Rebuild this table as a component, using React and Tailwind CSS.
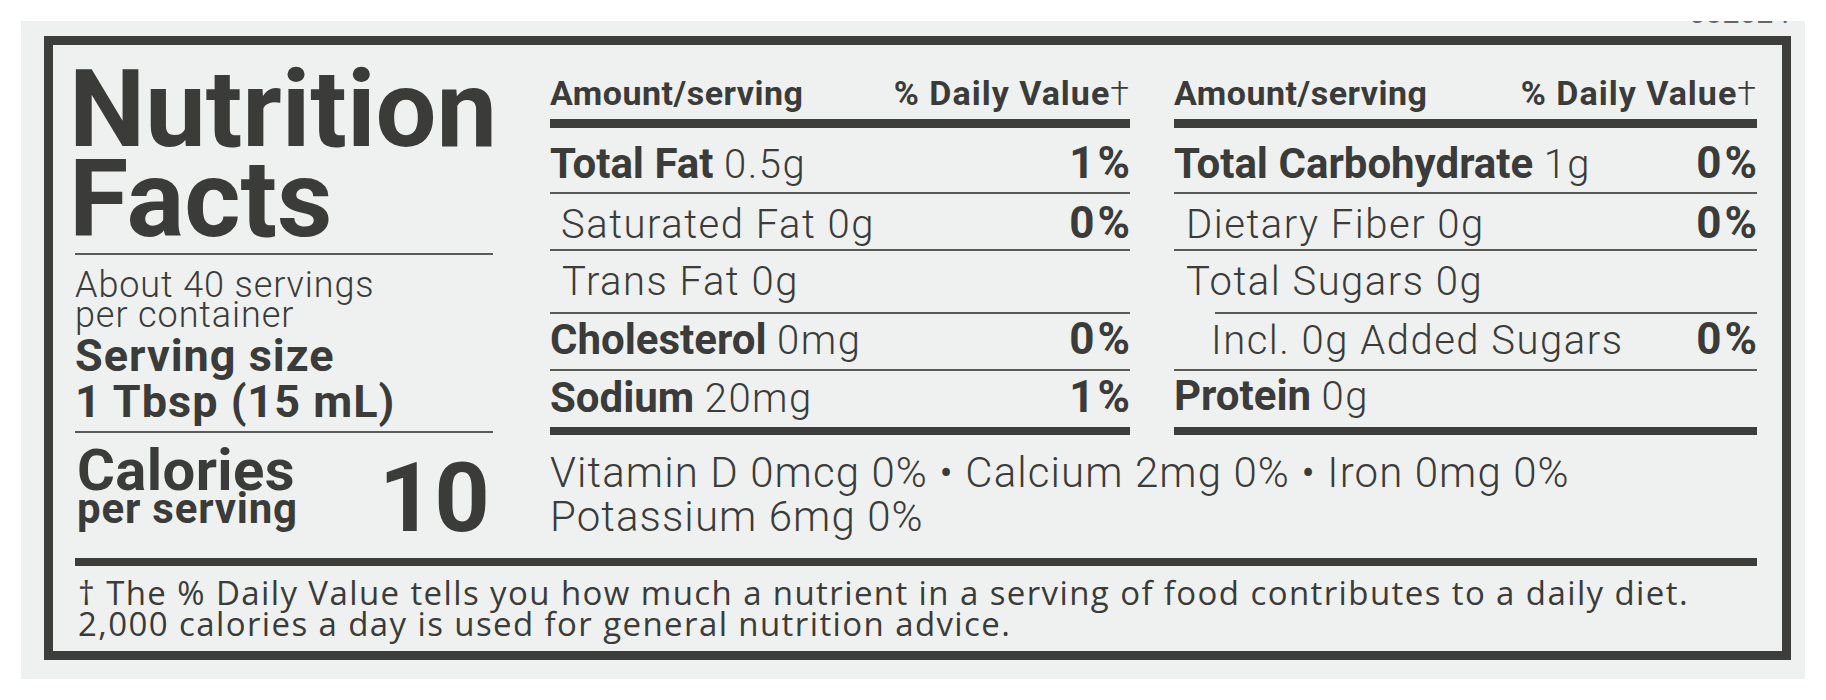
import React from "react";

const midRows = [
  { cls: "h-[64px] pt-[13px]", bold: "Total Fat", light: "0.5g", pct: "1%", indent: "" },
  { cls: "h-[55px] pt-[7px]", bold: "", light: "Saturated Fat 0g", pct: "0%", indent: "pl-[11px]" },
  { cls: "h-[61px] pt-[9px]", bold: "", light: "Trans Fat 0g", pct: "", indent: "pl-[12px]" },
  { cls: "h-[55px] pt-[3px]", bold: "Cholesterol", light: "0mg", pct: "0%", indent: "" },
  { cls: "h-[56px] pt-[4px]", bold: "Sodium", light: "20mg", pct: "1%", indent: "" },
];

const rightRows = [
  { cls: "h-[64px] pt-[13px]", bold: "Total Carbohydrate", light: "1g", pct: "0%", indent: "" },
  { cls: "h-[55px] pt-[7px]", bold: "", light: "Dietary Fiber 0g", pct: "0%", indent: "pl-[12px]" },
  { cls: "h-[61px] pt-[9px]", bold: "", light: "Total Sugars 0g", pct: "", indent: "pl-[12px]", lineCls: "ml-[41px]" },
  { cls: "h-[55px] pt-[3px]", bold: "", light: "Incl. 0g Added Sugars", pct: "0%", indent: "pl-[37px]" },
  { cls: "h-[56px] pt-[4px]", bold: "Protein", light: "0g", pct: "", indent: "" },
];

function Table({ rows, widthCls }) {
  return (
    <div className={widthCls}>
      <div className="h-[74px] pt-[31px] flex justify-between items-baseline text-[34px] leading-none font-bold">
        <span className="tracking-[0.5px]">Amount/serving</span>
        <span className="tracking-[1px]">
          % Daily Value<span className="font-light">†</span>
        </span>
      </div>
      <div className="h-[9px] bg-[#3d3d3b]" />
      {rows.map((r, i) => (
        <div key={i}>
          <div className={`flex justify-between items-baseline text-[42px] leading-none ${r.cls}`}>
            <div className={`whitespace-nowrap ${r.indent}`}>
              {r.bold && <span className="font-bold">{r.bold} </span>}
              <span className="font-light tracking-[1.5px] text-[40px]">{r.light}</span>
            </div>
            {r.pct && <span className="font-bold text-[44px] tracking-[3px] -mr-[3px]">{r.pct}</span>}
          </div>
          {i < rows.length - 1 ? (
            <div className={`h-[2px] bg-[#5a5a57] ${r.lineCls || ""}`} />
          ) : (
            <div className="h-[8px] bg-[#3d3d3b]" />
          )}
        </div>
      ))}
    </div>
  );
}

export default function App() {
  return (
    <div className="w-[1826px] h-[700px] bg-white pt-[21px] pl-[21px] font-['Roboto',sans-serif] text-[#3b3b39]">
      <div className="w-[1784px] h-[658px] bg-[#eef1f0]">
        <div className="h-[15px] flex justify-end pr-[15px]">
          <div className="h-[3px] overflow-hidden">
            <div className="-mt-[23px] text-[30px] leading-none text-[#666664]">032024</div>
          </div>
        </div>
        <div className="ml-[23px] w-[1747px] h-[624px] border-[9px] border-[#3d3d3b] pl-[22px]">
          <div className="flex h-[513px]">
            {/* Left column */}
            <div className="w-[418px]">
              <div className="pt-[19px] -ml-[6px] text-[108px] leading-[90px] font-bold">
                Nutrition
                <br />
                Facts
              </div>
              <div className="mt-[9px] h-[2px] bg-[#5a5a57]" />
              <div className="mt-[15px] text-[36px] leading-[30px] font-light tracking-[0.9px]">
                About 40 servings
                <br />
                per container
              </div>
              <div className="mt-[3px] text-[45px] leading-[46px] font-bold tracking-[1px]">
                Serving size
                <br />
                1 Tbsp (15 mL)
              </div>
              <div className="mt-[6px] h-[2px] bg-[#5a5a57]" />
              <div className="flex justify-between items-start pt-[14px]">
                <div className="pl-[2px] font-bold">
                  <div className="text-[58px] leading-[46px] tracking-[0.4px]">Calories</div>
                  <div className="text-[42px] leading-[31px] tracking-[0.8px]">per serving</div>
                </div>
                <div className="mt-[3px] mr-[3px] text-[97px] leading-none font-bold">10</div>
              </div>
            </div>
            {/* Right part */}
            <div className="ml-[57px] w-[1207px]">
              <div className="flex gap-[44px]">
                <Table rows={midRows} widthCls="w-[580px]" />
                <Table rows={rightRows} widthCls="w-[583px]" />
              </div>
              <div className="mt-[16px] text-[42px] leading-[44px] font-light tracking-[1.1px] whitespace-nowrap">
                <div>Vitamin D 0mcg 0% • Calcium 2mg 0% • Iron 0mg 0%</div>
                <div>Potassium 6mg 0%</div>
              </div>
            </div>
          </div>
          <div className="h-[8px] w-[1682px] bg-[#3d3d3b]" />
          <div className="mt-[11px] pl-[3px] font-['Open_Sans',sans-serif] text-[33px] leading-[31px] tracking-[1.4px] whitespace-nowrap">
            <div>† The % Daily Value tells you how much a nutrient in a serving of food contributes to a daily diet.</div>
            <div>2,000 calories a day is used for general nutrition advice.</div>
          </div>
        </div>
      </div>
    </div>
  );
}
